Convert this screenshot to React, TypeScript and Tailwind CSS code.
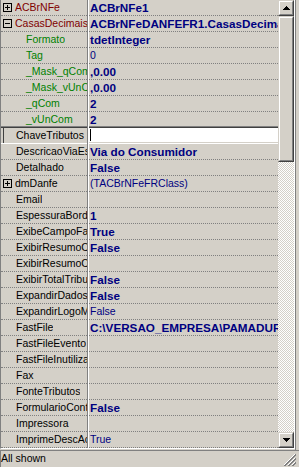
import clsx from 'clsx';

type Tone = 'ref' | 'child' | 'plain';

type PropRow = {
  name: string;
  value?: string;
  bold?: boolean;
  tone?: Tone;
  expander?: '+' | '-';
  selected?: boolean;
};

const rows: PropRow[] = [
  { name: 'ACBrNFe', value: 'ACBrNFe1', bold: true, tone: 'ref', expander: '+' },
  { name: 'CasasDecimais', value: 'ACBrNFeDANFEFR1.CasasDecimais', bold: true, tone: 'ref', expander: '-' },
  { name: 'Formato', value: 'tdetInteger', bold: true, tone: 'child' },
  { name: 'Tag', value: '0', tone: 'child' },
  { name: '_Mask_qCom', value: ',0.00', bold: true, tone: 'child' },
  { name: '_Mask_vUnCom', value: ',0.00', bold: true, tone: 'child' },
  { name: '_qCom', value: '2', bold: true, tone: 'child' },
  { name: '_vUnCom', value: '2', bold: true, tone: 'child' },
  { name: 'ChaveTributos', selected: true },
  { name: 'DescricaoViaEstabelec', value: 'Via do Consumidor', bold: true },
  { name: 'Detalhado', value: 'False', bold: true },
  { name: 'dmDanfe', value: '(TACBrNFeFRClass)', expander: '+' },
  { name: 'Email' },
  { name: 'EspessuraBorda', value: '1', bold: true },
  { name: 'ExibeCampoFatura', value: 'True', bold: true },
  { name: 'ExibirResumoCanhoto', value: 'False', bold: true },
  { name: 'ExibirResumoCanhoto_Texto' },
  { name: 'ExibirTotalTributosItem', value: 'False', bold: true },
  { name: 'ExpandirDadosAdicionaisAuto', value: 'False', bold: true },
  { name: 'ExpandirLogoMarca', value: 'False' },
  { name: 'FastFile', value: 'C:\\VERSAO_EMPRESA\\PAMADUREIRA\\Report\\DANFe.fr3', bold: true },
  { name: 'FastFileEvento' },
  { name: 'FastFileInutilizacao' },
  { name: 'Fax' },
  { name: 'FonteTributos' },
  { name: 'FormularioContinuo', value: 'False', bold: true },
  { name: 'Impressora' },
  { name: 'ImprimeDescAcrescItem', value: 'True' },
];

function ExpanderBox({ sign }: { sign: '+' | '-' }) {
  return (
    <svg width="9" height="9" viewBox="0 0 9 9" shapeRendering="crispEdges" className="shrink-0">
      <rect x="0.5" y="0.5" width="8" height="8" fill="none" stroke="#000" />
      <line x1="2" y1="4.5" x2="7" y2="4.5" stroke="#000" />
      {sign === '+' && <line x1="4.5" y1="2" x2="4.5" y2="7" stroke="#000" />}
    </svg>
  );
}

function Row({ row, beforeSelected }: { row: PropRow; beforeSelected: boolean }) {
  const cellEdge = row.selected
    ? 'border-b border-white'
    : beforeSelected
      ? 'border-b border-[#404040] shadow-[inset_0_-1px_0_#808080]'
      : 'border-b border-dotted border-[#808080]';

  return (
    <div className="flex h-[16px]">
      <div
        className={clsx(
          'w-[86px] h-[16px] flex items-center overflow-hidden whitespace-nowrap',
          cellEdge,
          row.tone === 'ref' && 'text-[#800000]',
          row.tone === 'child' && 'text-[#008000]',
          !row.tone && 'text-black'
        )}
      >
        {row.selected && <div className="ml-[2px] w-px h-[15px] bg-[#404040] shrink-0" />}
        {row.expander ? (
          <div className="flex items-center ml-[2px] min-w-0">
            <ExpanderBox sign={row.expander} />
            <span className="ml-[3px] leading-[15px] overflow-hidden">{row.name}</span>
          </div>
        ) : (
          <span
            className={clsx(
              'leading-[15px] overflow-hidden',
              row.tone === 'child' ? 'pl-[25px]' : row.selected ? 'pl-[12px]' : 'pl-[15px]'
            )}
          >
            {row.name}
          </span>
        )}
      </div>

      <div className="w-px h-[16px] bg-[#808080]" />
      <div className="w-px h-[16px] bg-white" />

      <div className={clsx('flex-1 min-w-0 h-[16px] overflow-hidden whitespace-nowrap', cellEdge)}>
        {row.selected ? (
          <div className="h-[14px] bg-white flex items-center pl-[1px]">
            <div className="w-px h-[12px] bg-black" />
          </div>
        ) : (
          <span
            className={clsx(
              'block overflow-hidden pl-[1px] text-[#000080]',
              row.bold ? 'font-bold text-[11.7px] leading-[15px]' : 'leading-[15px]'
            )}
          >
            {row.value}
          </span>
        )}
      </div>
    </div>
  );
}

function ScrollButton({ dir }: { dir: 'up' | 'down' }) {
  return (
    <div className="w-[16px] h-[16px] border border-t-[#d4d0c8] border-l-[#d4d0c8] border-r-[#404040] border-b-[#404040]">
      <div className="w-full h-full border border-t-white border-l-white border-r-[#808080] border-b-[#808080] flex items-center justify-center">
        <svg width="7" height="4" viewBox="0 0 7 4" shapeRendering="crispEdges">
          {dir === 'up' ? <polygon points="3.5,0 7,4 0,4" fill="#000" /> : <polygon points="0,0 7,0 3.5,4" fill="#000" />}
        </svg>
      </div>
    </div>
  );
}

function ScrollBar() {
  return (
    <div className="w-[16px] h-[448px] flex flex-col">
      <ScrollButton dir="up" />
      <div className="w-[16px] h-[146px] border border-t-[#d4d0c8] border-l-[#d4d0c8] border-r-[#404040] border-b-[#404040]">
        <div className="w-full h-full border border-t-white border-l-white border-r-[#808080] border-b-[#808080]" />
      </div>
      <div className="flex-1 bg-[image:repeating-conic-gradient(#ffffff_0_25%,#d4d0c8_0_50%)] bg-[length:2px_2px]" />
      <ScrollButton dir="down" />
    </div>
  );
}

function SizeGrip() {
  return (
    <svg width="12" height="12" viewBox="0 0 12 12" shapeRendering="crispEdges" className="absolute right-[3px] bottom-[1px]">
      <line x1="11" y1="0" x2="0" y2="11" stroke="#ffffff" />
      <line x1="12" y1="0" x2="0" y2="12" stroke="#808080" />
      <line x1="12" y1="1" x2="1" y2="12" stroke="#808080" />
      <line x1="11" y1="4" x2="4" y2="11" stroke="#ffffff" />
      <line x1="12" y1="4" x2="4" y2="12" stroke="#808080" />
      <line x1="12" y1="5" x2="5" y2="12" stroke="#808080" />
      <line x1="11" y1="8" x2="8" y2="11" stroke="#ffffff" />
      <line x1="12" y1="8" x2="8" y2="12" stroke="#808080" />
      <line x1="12" y1="9" x2="9" y2="12" stroke="#808080" />
    </svg>
  );
}

export default function App() {
  const selectedIdx = rows.findIndex(r => r.selected);

  return (
    <div className="w-[299px] h-[467px] bg-[#d4d0c8] flex flex-col overflow-hidden font-['Liberation_Sans',Arial,sans-serif] text-[10.5px] text-black">
      <div className="flex h-[450px]">
        <div className="w-[295px] h-[449px] flex border-l border-l-[#808080] border-r border-r-white border-b border-b-white">
          <div className="w-[277px] flex flex-col">
            {rows.map((row, idx) => (
              <Row key={row.name} row={row} beforeSelected={idx === selectedIdx - 1} />
            ))}
          </div>
          <ScrollBar />
        </div>
        <div className="w-[4px] h-[450px] border-l border-[#808080]" />
      </div>

      <div className="relative h-[17px] border-t border-[#808080] border-l border-l-[#808080]">
        <span className="block leading-[15px]">All shown</span>
        <SizeGrip />
      </div>
    </div>
  );
}
